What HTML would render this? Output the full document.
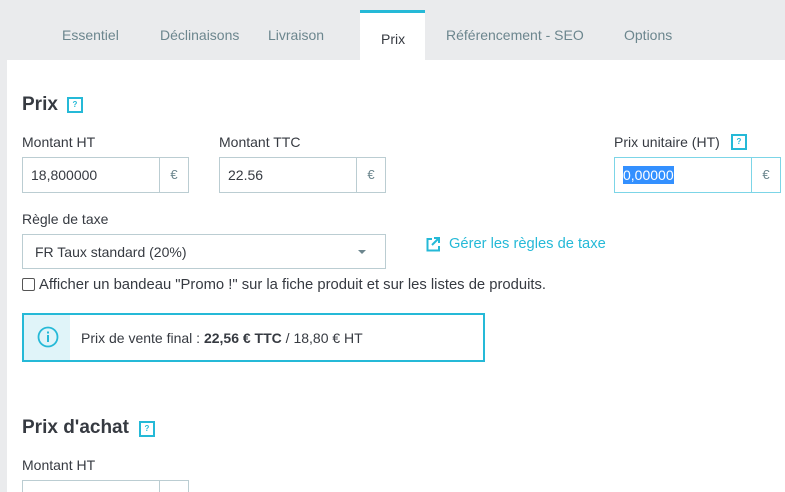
<!DOCTYPE html>
<html style="width:785px;height:492px;overflow:hidden"><head><meta charset="utf-8"><style>
*{box-sizing:border-box;margin:0;padding:0}
body{width:785px;height:492px;overflow:hidden;background:#eaebed;font-family:"Liberation Sans",sans-serif;color:#363a41;position:relative}
.a{position:absolute}
.tab{position:absolute;top:27px;font-size:14px;color:#6c868e}
.panel{position:absolute;left:7px;top:60px;width:778px;height:432px;background:#fff}
.lbl{position:absolute;font-size:14px;color:#363a41}
.inp{position:absolute;height:36px;border:1px solid #bbcdd2;background:#fff;font-size:14px}
.inp .v{position:absolute;left:8px;top:9px}
.inp .ad{position:absolute;right:0;top:0;bottom:0;width:29px;border-left:1px solid #bbcdd2;color:#6c868e;text-align:center;line-height:34px;font-size:13px}
.h{position:absolute;font-size:19px;font-weight:bold;color:#363a41}
.q{position:absolute;width:16px;height:16px;border:2px solid #25b9d7;color:#25b9d7;font-size:8px;text-align:center;line-height:12px;font-weight:bold}
</style></head><body>
<div class="a" style="left:360px;top:10px;width:65px;height:52px;background:#fff;border-top:3px solid #25b9d7"></div>
<div class="tab" style="left:62px">Essentiel</div>
<div class="tab" style="left:160px">Déclinaisons</div>
<div class="tab" style="left:268px">Livraison</div>
<div class="tab" style="left:381px;top:31px;color:#363a41">Prix</div>
<div class="tab" style="left:446px">Référencement - SEO</div>
<div class="tab" style="left:624px">Options</div>
<div class="panel"></div>
<div class="h" style="left:22px;top:94px">Prix</div>
<div class="q" style="left:67px;top:97px">?</div>
<div class="lbl" style="left:22px;top:134px">Montant HT</div>
<div class="lbl" style="left:219px;top:134px">Montant TTC</div>
<div class="lbl" style="left:614px;top:134px">Prix unitaire (HT)</div>
<div class="q" style="left:731px;top:134px">?</div>
<div class="inp" style="left:22px;top:157px;width:167px"><span class="v">18,800000</span><span class="ad">€</span></div>
<div class="inp" style="left:219px;top:157px;width:167px"><span class="v">22.56</span><span class="ad">€</span></div>
<div class="inp" style="left:614px;top:157px;width:167px;border-color:#7cd5e7"><span class="v" style="background:#3390ff;color:#fff;top:8px;padding:1px 0">0,00000</span><span class="ad" style="border-left-color:#7cd5e7">€</span></div>
<div class="lbl" style="left:22px;top:211px">Règle de taxe</div>
<div class="inp" style="left:22px;top:234px;width:364px;height:35px"><span class="v" style="left:12px">FR Taux standard (20%)</span>
<span class="a" style="right:19px;top:15px;border-left:4px solid transparent;border-right:4px solid transparent;border-top:4px solid #6c868e"></span></div>
<svg class="a" style="left:426px;top:237px" width="14" height="15" viewBox="0 0 14 15"><path d="M6 2H1.5v11.5H13V9" fill="none" stroke="#25b9d7" stroke-width="2"/><path d="M8 1h5v5M13 1 6 8" fill="none" stroke="#25b9d7" stroke-width="2"/></svg>
<div class="a" style="left:449px;top:236px;font-size:14.7px;color:#25b9d7">Gérer les règles de taxe</div>
<div class="a" style="left:22px;top:278px;width:13px;height:13px;border:1px solid #555;border-radius:2px;background:#fff"></div>
<div class="lbl" style="left:39px;top:277px;font-size:14.8px">Afficher un bandeau "Promo !" sur la fiche produit et sur les listes de produits.</div>
<div class="a" style="left:22px;top:313px;width:463px;height:49px;border:2px solid #25b9d7;background:#fff">
<div class="a" style="left:0;top:0;width:46px;height:45px;background:#e0f4f9"></div>
<svg class="a" style="left:13px;top:11px" width="22" height="22" viewBox="0 0 22 22"><circle cx="11" cy="11" r="9.5" fill="none" stroke="#25b9d7" stroke-width="1.8"/><rect x="10" y="9" width="2" height="7" fill="#25b9d7"/><rect x="10" y="5.5" width="2" height="2" fill="#25b9d7"/></svg>
<div class="a" style="left:57px;top:15px;font-size:14px">Prix de vente final : <b>22,56 € TTC</b> / 18,80 € HT</div></div>
<div class="h" style="left:22px;top:417px">Prix d'achat</div>
<div class="q" style="left:139px;top:421px">?</div>
<div class="lbl" style="left:22px;top:457px">Montant HT</div>
<div class="inp" style="left:22px;top:480px;width:167px;height:12px;border-bottom:none"><span class="ad"></span></div>
</body></html>
